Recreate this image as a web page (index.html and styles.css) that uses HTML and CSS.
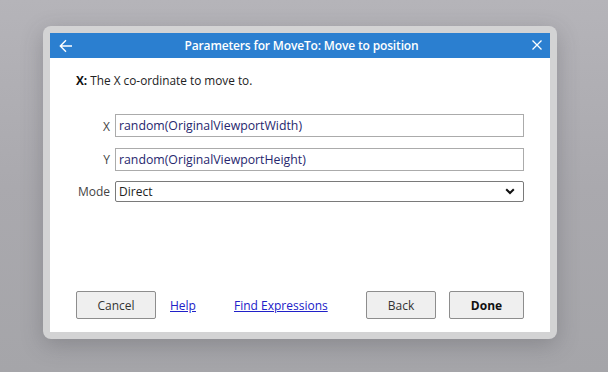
FILE: index.html
```html
<!DOCTYPE html>
<html>
<head>
<meta charset="utf-8">
<link rel="stylesheet" href="styles.css">
</head>
<body>
<div class="frame">
  <div class="dialog">
    <div class="titlebar">
      <svg class="back" width="14" height="14" viewBox="0 0 14 14"><path d="M13 7H1.5M7 1.3L1.3 7L7 12.7" fill="none" stroke="#fff" stroke-width="1.4"/></svg>
      <div class="title">Parameters for MoveTo: Move to position</div>
      <svg class="close" width="10" height="10" viewBox="0 0 10 10"><path d="M0.5 0.5L9.5 9.5M9.5 0.5L0.5 9.5" fill="none" stroke="#fff" stroke-width="1.3"/></svg>
    </div>
    <div class="content">
      <p class="desc"><b>X:</b> The X co-ordinate to move to.</p>
      <div class="form">
        <label class="lbl">X</label>
        <div class="input first">random(OriginalViewportWidth)</div>
        <label class="lbl">Y</label>
        <div class="input">random(OriginalViewportHeight)</div>
        <label class="lbl">Mode</label>
        <div class="select"><span>Direct</span><svg width="10" height="7" viewBox="0 0 10 7"><path d="M1.2 1.2L5 5L8.8 1.2" fill="none" stroke="#111" stroke-width="2"/></svg></div>
      </div>
      <div class="footer">
        <button class="btn cancel">Cancel</button>
        <a class="link help" href="#">Help</a>
        <a class="link find" href="#">Find Expressions</a>
        <button class="btn backbtn">Back</button>
        <button class="btn done">Done</button>
      </div>
    </div>
  </div>
</div>
</body>
</html>
```

FILE: styles.css
```css
html, body {
  margin: 0;
  height: 372px;
}
body {
  background: linear-gradient(180deg, #b5b4b9 0%, #aaa9ae 50%, #a5a5a9 100%);
  padding: 26px 0 0 43px;
  box-sizing: border-box;
  font-family: "Open Sans", "Noto Sans", sans-serif;
  font-size: 12px;
  color: #222;
}
.frame {
  width: 514px;
  height: 313px;
  box-sizing: border-box;
  padding: 7px;
  background: #d3d3d4;
  border-radius: 8px;
  box-shadow: 0 6px 22px rgba(60, 60, 70, 0.28);
}
.dialog {
  width: 500px;
  height: 299px;
  background: #fff;
  display: flex;
  flex-direction: column;
}
.titlebar {
  height: 25px;
  background: #2b7fd0;
  display: flex;
  align-items: center;
  padding: 0 8px 0 9px;
  color: #fff;
}
.back { display: block; }
.close { display: block; margin-top: -1px; }
.title {
  flex: 1;
  text-align: center;
  font-weight: 600;
  font-size: 12px;
  letter-spacing: -0.15px;
  padding-right: 2px;
}
.content {
  flex: 1;
  display: flex;
  flex-direction: column;
  padding: 0 26px 13px 26px;
}
.desc {
  margin: 14px 0 0 0;
  line-height: 17px;
  color: #222;
  font-size: 11.8px;
}
.desc b { color: #111; }
.form {
  margin-top: 25px;
  display: grid;
  grid-template-columns: 34px 1fr;
  column-gap: 5px;
  row-gap: 10px;
  align-items: center;
}
.lbl {
  text-align: right;
  color: #444;
}
.input {
  height: 23px;
  box-sizing: border-box;
  border: 1px solid #ababab;
  padding: 0 3px;
  line-height: 21px;
  color: #27276e;
  font-size: 12.3px;
}
.input.first { margin-bottom: 1px; }
.select {
  height: 21px;
  box-sizing: border-box;
  border: 1px solid #7a7a7a;
  border-radius: 2px;
  padding: 0 8px 0 3px;
  display: flex;
  align-items: center;
  justify-content: space-between;
  color: #222;
}
.footer {
  margin-top: auto;
  display: flex;
  align-items: center;
}
.btn {
  height: 28px;
  box-sizing: border-box;
  border: 1px solid #8d8d8d;
  border-radius: 2px;
  background: #efefef;
  font-family: inherit;
  font-size: 12px;
  color: #333;
  padding: 0;
}
.cancel { width: 80px; }
.backbtn { width: 70px; margin-left: auto; }
.done { width: 75px; margin-left: 13px; font-weight: 700; color: #111; }
.link {
  color: #2020c8;
  text-decoration: underline;
}
.help { margin-left: 14px; }
.find { margin-left: 38px; }
```
